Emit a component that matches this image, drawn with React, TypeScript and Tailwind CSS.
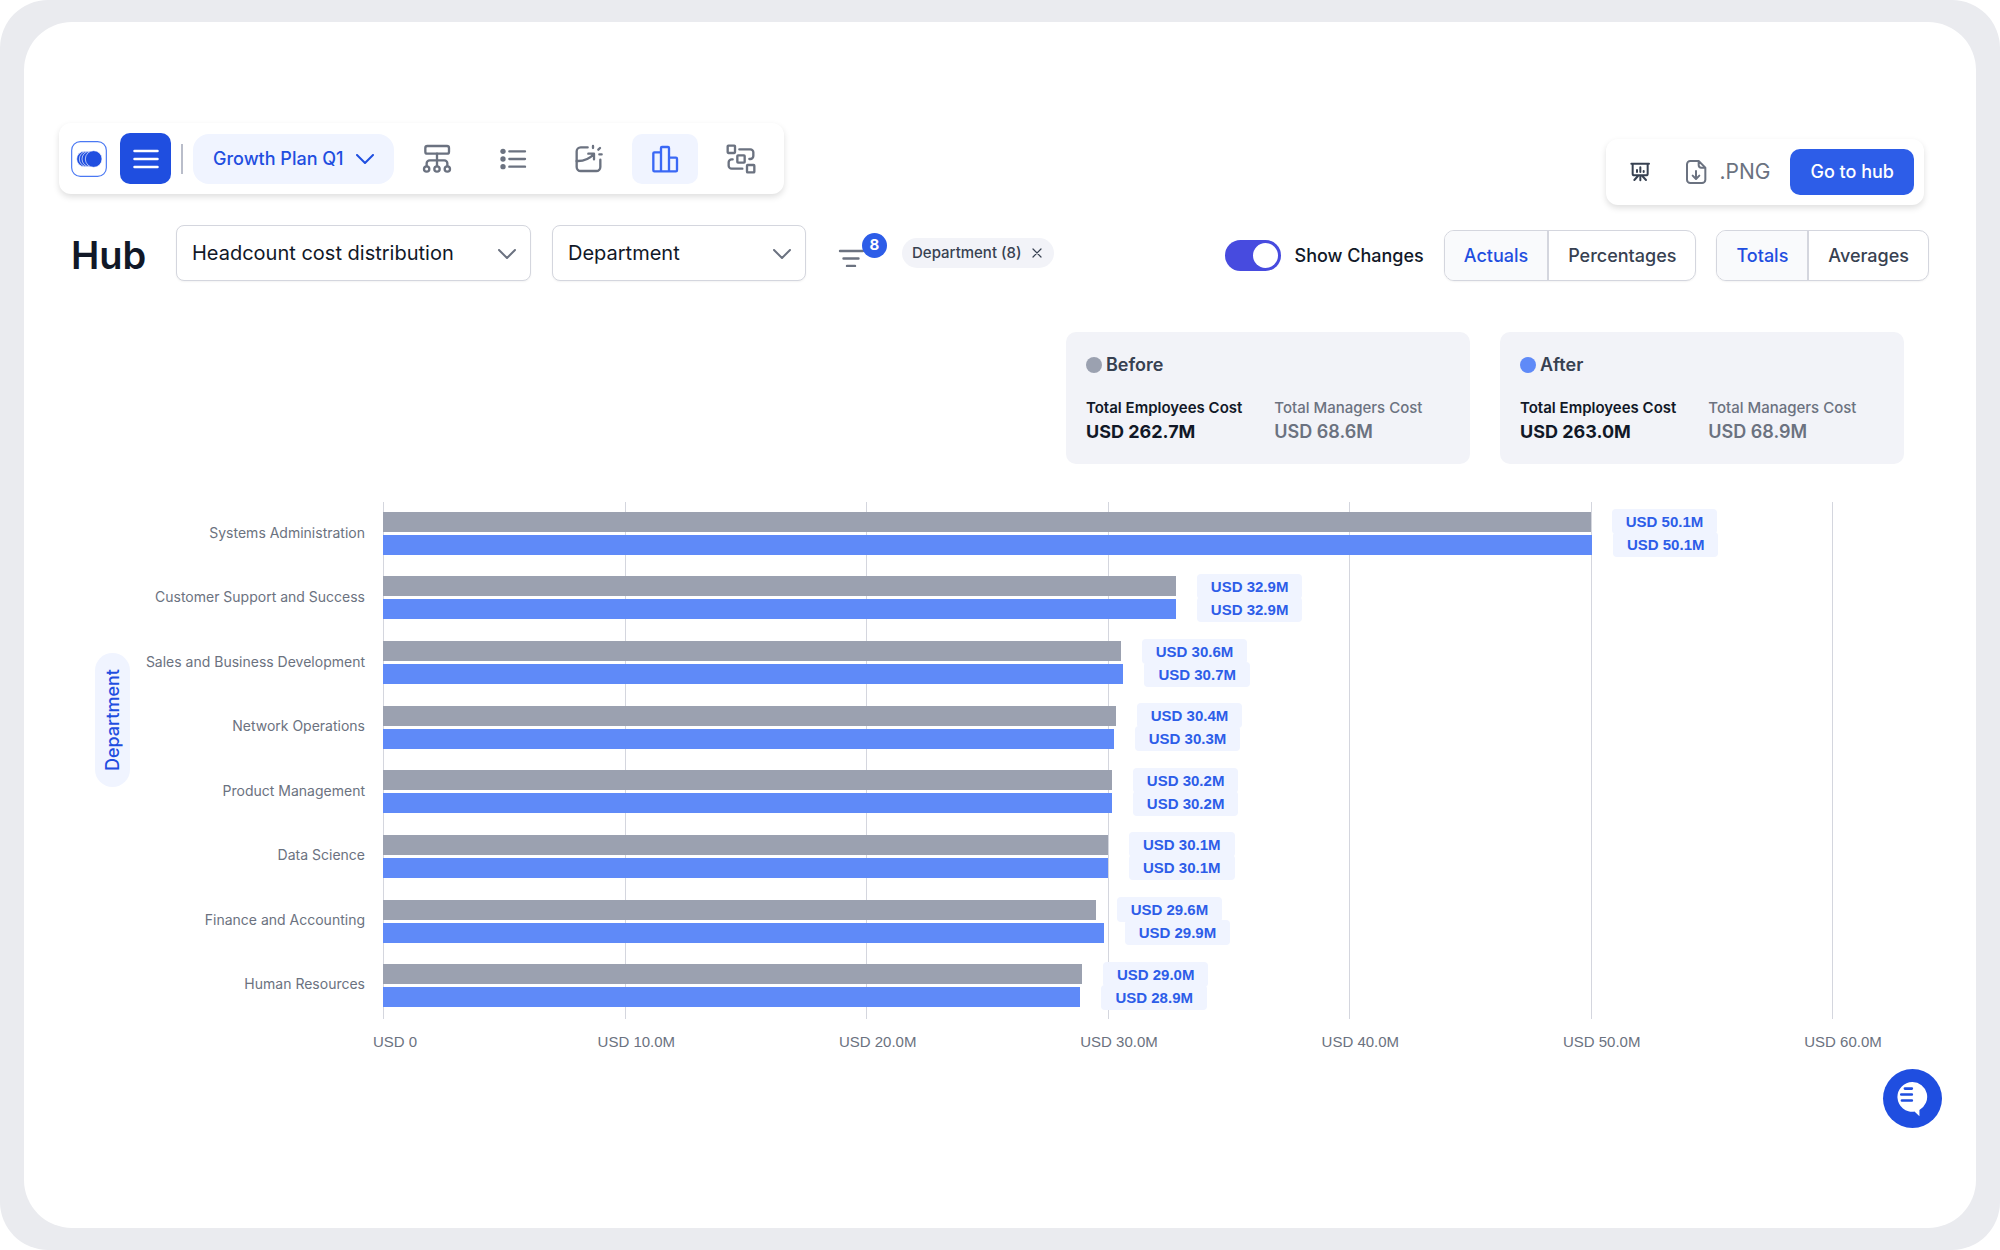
import React, { useState } from "react";

type Row = { name: string; before: [number, string]; after: [number, string] };

const rows: Row[] = [
  { name: "Systems Administration", before: [50.01, "USD 50.1M"], after: [50.06, "USD 50.1M"] },
  { name: "Customer Support and Success", before: [32.83, "USD 32.9M"], after: [32.83, "USD 32.9M"] },
  { name: "Sales and Business Development", before: [30.55, "USD 30.6M"], after: [30.66, "USD 30.7M"] },
  { name: "Network Operations", before: [30.34, "USD 30.4M"], after: [30.26, "USD 30.3M"] },
  { name: "Product Management", before: [30.18, "USD 30.2M"], after: [30.18, "USD 30.2M"] },
  { name: "Data Science", before: [30.02, "USD 30.1M"], after: [30.02, "USD 30.1M"] },
  { name: "Finance and Accounting", before: [29.51, "USD 29.6M"], after: [29.84, "USD 29.9M"] },
  { name: "Human Resources", before: [28.94, "USD 29.0M"], after: [28.88, "USD 28.9M"] },
];

const axisMax = 60;
const ticks = ["USD 0", "USD 10.0M", "USD 20.0M", "USD 30.0M", "USD 40.0M", "USD 50.0M", "USD 60.0M"];

const stroke = {
  fill: "none",
  stroke: "currentColor",
  strokeLinecap: "round" as const,
  strokeLinejoin: "round" as const,
};

const Chevron = ({ className }: { className: string }) => (
  <svg viewBox="0 0 18 10" className={className} {...stroke} strokeWidth={2} aria-hidden="true">
    <path d="M1 1l8 8 8-8" />
  </svg>
);

const LogoIcon = () => (
  <svg viewBox="0 0 108 108" className="size-9 shrink-0" aria-label="Home" role="img">
    <rect x="2" y="2" width="104" height="104" rx="26" fill="#fff" stroke="#4a78f3" strokeWidth="3.5" />
    <g fill="#1f4ee0" stroke="#fff" strokeWidth="2">
      <circle cx="40" cy="54" r="23" />
      <circle cx="48" cy="54" r="23" />
      <circle cx="56" cy="54" r="23" />
      <circle cx="68" cy="54" r="25" />
    </g>
  </svg>
);

const OrgIcon = () => (
  <svg viewBox="63 102 90 90" className="size-[30px]" {...stroke} strokeWidth={7} aria-hidden="true">
    <rect x="73" y="108" width="71" height="23" rx="6" />
    <path d="M108 131v37M77 168v-8a9 9 0 0 1 9-9h44a9 9 0 0 1 9 9v8" />
    <circle cx="77" cy="177" r="8" />
    <circle cx="108" cy="177" r="8" />
    <circle cx="139" cy="177" r="8" />
  </svg>
);

const ListIcon = () => (
  <svg viewBox="291 102 90 90" className="size-[30px]" {...stroke} strokeWidth={7} aria-hidden="true">
    <path d="M325 124h47M325 147h47M325 170h47" />
    <g fill="currentColor" stroke="none">
      <circle cx="306" cy="124" r="8" />
      <circle cx="306" cy="147" r="8" />
      <circle cx="306" cy="170" r="8" />
    </g>
  </svg>
);

const ForecastIcon = () => (
  <svg viewBox="522 102 90 90" className="size-[30px]" {...stroke} strokeWidth={7} aria-hidden="true">
    <path d="M563 112h-21a12 12 0 0 0-12 12v47a12 12 0 0 0 12 12h47a12 12 0 0 0 12-12v-22" />
    <path d="M530 153c20 1 38-6 52-21M565 131h17v17" />
    <path d="M579 108v6M600 114l-5 5M598 133h7" />
  </svg>
);

const BarsIcon = () => (
  <svg viewBox="749 102 90 90" className="size-[30px]" {...stroke} strokeWidth={7} aria-hidden="true">
    <path d="M782 184h-20a3 3 0 0 1-3-3v-51a3 3 0 0 1 3-3h20M782 184v-70a3 3 0 0 1 3-3h18a3 3 0 0 1 3 3v70zM806 143h21a3 3 0 0 1 3 3v35a3 3 0 0 1-3 3h-21" />
  </svg>
);

const FlowIcon = () => (
  <svg viewBox="978 102 90 90" className="size-[30px]" {...stroke} strokeWidth={7} aria-hidden="true">
    <rect x="983" y="107" width="22" height="22" rx="2" />
    <rect x="1012" y="136" width="22" height="22" rx="2" />
    <rect x="1041" y="165" width="22" height="22" rx="2" />
    <path d="M1018 118h33a9 9 0 0 1 9 9v11a9 9 0 0 1-9 9h-3M998 148h-3a9 9 0 0 0-9 9v10a9 9 0 0 0 9 9h32" />
  </svg>
);

const PresentIcon = () => (
  <svg viewBox="156 95 60 60" className="size-5" {...stroke} strokeWidth={6} aria-hidden="true">
    <path d="M160 100h53M164 100v30a5 5 0 0 0 5 5h35a5 5 0 0 0 5-5v-30M187 136v14M180 137l-11 12M193 137l11 12" />
    <path d="M177 119v6M187 111v14M197 122v3" />
  </svg>
);

const FileIcon = () => (
  <svg viewBox="317 83 84 84" className="size-7" {...stroke} strokeWidth={6} aria-hidden="true">
    <path d="M361 92h-25a10 10 0 0 0-10 10v46a10 10 0 0 0 10 10h35a10 10 0 0 0 10-10v-36zM361 92v12a8 8 0 0 0 8 8h12" />
    <path d="M353 122v23M343 136l10 10 10-10" />
  </svg>
);

const ChatIcon = () => (
  <svg viewBox="0 0 100 110" className="h-[37px] w-[33px]" aria-hidden="true">
    <path fill="#fff" d="M50 5a45 45 0 1 0 6 89.500l15 14v-19a45 45 0 0 0-21-84.500z" />
    <path stroke="#1f4ee0" strokeWidth="8" strokeLinecap="round" d="M27 25h21M16 43h32M18 61h30" />
  </svg>
);

function Segmented({ label, options }: { label: string; options: string[] }) {
  const [active, setActive] = useState(0);
  return (
    <div role="group" aria-label={label} className="flex h-[51px] divide-x-2 divide-[#d4d6de] overflow-hidden rounded-[10px] border border-[#d4d6de] bg-white shadow-xs">
      {options.map((o, i) => (
        <button
          key={o}
          type="button"
          aria-pressed={i === active}
          onClick={() => setActive(i)}
          className={i === active ? "bg-[#f9fafc] px-[19px] text-lg font-medium text-[#1f4ee0]" : "px-[19px] text-lg font-medium text-[#374151]"}
        >
          {o}
        </button>
      ))}
    </div>
  );
}

function Picker({ label, options, className }: { label: string; options: string[]; className: string }) {
  return (
    <div className={className}>
      <select aria-label={label} className="h-14 w-full appearance-none rounded-lg border border-[#d4d6de] bg-white px-[15px] text-xl text-[#111827] shadow-xs">
        {options.map((o) => (
          <option key={o}>{o}</option>
        ))}
      </select>
      <Chevron className="pointer-events-none absolute top-6 right-[15px] h-[10px] w-[18px] text-[#6b7280]" />
    </div>
  );
}

function SummaryCard({ title, dot, employees, managers }: { title: string; dot: string; employees: string; managers: string }) {
  return (
    <section className="w-[404px] rounded-[10px] bg-[#f2f3f8] p-5">
      <h2 className="flex items-center gap-1 text-lg leading-[26px] font-semibold text-[#374151]">
        <span className={dot} />
        {title}
      </h2>
      <dl className="mt-[18px] flex gap-8">
        <div className="text-[#111827]">
          <dt className="text-[15px] leading-6 font-semibold">{"Total Employees Cost"}</dt>
          <dd className="text-lg leading-6 font-bold">{employees}</dd>
        </div>
        <div className="text-[#6b7280]">
          <dt className="text-[15px] leading-6 font-medium">{"Total Managers Cost"}</dt>
          <dd className="text-lg leading-6 font-semibold">{managers}</dd>
        </div>
      </dl>
    </section>
  );
}

function Bar({ value, label, color }: { value: number; label: string; color: string }) {
  return (
    <div className="flex h-5 items-center">
      <div className={color} style={{ width: `${(value / axisMax) * 100}%` }} />
      <span className="ml-[21px] shrink-0 rounded bg-[#f0f4ff] px-[14px] font-['Liberation_Sans',sans-serif] text-[15px] leading-[25px] font-bold text-[#2d5de8]">
        {label}
      </span>
    </div>
  );
}

const tabs = [
  { label: "Org chart", icon: <OrgIcon /> },
  { label: "List", icon: <ListIcon /> },
  { label: "Forecast", icon: <ForecastIcon /> },
  { label: "Charts", icon: <BarsIcon /> },
  { label: "Flow", icon: <FlowIcon /> },
];

export default function App() {
  const [showChanges, setShowChanges] = useState(true);
  const [tab, setTab] = useState("Charts");

  return (
    <div className="flex min-h-screen flex-col rounded-[48px] bg-[#eaebef] px-6 py-[22px] font-['Inter',sans-serif]">
      <main className="flex grow flex-col rounded-[48px] bg-white px-[47px] pt-[101px] pb-[100px]">
        <div className="-mx-3 flex items-start justify-between">
          <nav className="flex items-center gap-[10px] rounded-xl bg-white p-[10px] pl-3 shadow-[0_3px_6px_rgba(0,0,0,0.13)]">
            <LogoIcon />
            <button type="button" aria-label="Menu" className="ml-[3px] flex size-[51px] items-center justify-center rounded-[10px] bg-[#1f4ee0] text-white">
              <svg viewBox="0 0 26 20" className="h-5 w-[26px]" {...stroke} strokeWidth={2.5} aria-hidden="true">
                <path d="M1.500 2h23M1.500 10h23M1.500 18h23" />
              </svg>
            </button>
            <span className="h-[30px] w-[2px] bg-[#b9bdca]" />
            <button type="button" className="flex h-[50px] items-center gap-3 rounded-2xl bg-[#f0f4ff] px-5 text-lg font-medium text-[#1f4ee0]">
              {"Growth Plan Q1"}
              <Chevron className="h-[10px] w-[18px]" />
            </button>
            {tabs.map((t) => (
              <button
                key={t.label}
                type="button"
                aria-label={t.label}
                aria-pressed={t.label === tab}
                onClick={() => setTab(t.label)}
                className={
                  t.label === tab
                    ? "flex h-[50px] w-[66px] items-center justify-center rounded-[10px] bg-[#f0f4ff] text-[#3a68f5]"
                    : "flex h-[50px] w-[66px] items-center justify-center rounded-[10px] text-[#6b7280]"
                }
              >
                {t.icon}
              </button>
            ))}
          </nav>
          <div className="mt-4 mr-[17px] flex items-center rounded-xl bg-white p-[10px] shadow-[0_3px_6px_rgba(0,0,0,0.13)]">
            <button type="button" aria-label="Present" className="px-[14px] text-[#374151]">
              <PresentIcon />
            </button>
            <button type="button" className="mr-5 ml-5 flex items-center gap-2 text-[21px] text-[#6b7280]">
              <FileIcon />
              {".PNG"}
            </button>
            <button type="button" className="h-[46px] rounded-[10px] bg-[#2d5de8] px-5 text-lg font-medium text-white">
              {"Go to hub"}
            </button>
          </div>
        </div>

        <header className="mt-5 flex items-end justify-between">
          <div className="flex items-center">
            <h1 className="w-[105px] pt-1 text-[38px] leading-[52px] font-semibold text-[#111827]">Hub</h1>
            <Picker label="Metric" options={["Headcount cost distribution"]} className="relative w-[355px]" />
            <Picker label="Group by" options={["Department"]} className="relative ml-[21px] w-[254px]" />
            <button type="button" aria-label="Filters" className="relative ml-8 pt-[10px] text-[#6b7280]">
              <svg viewBox="0 0 28 18" className="h-[18px] w-7" {...stroke} strokeWidth={2.400} aria-hidden="true">
                <path d="M2 2h23M5.500 9.500h15M9 17h8" />
              </svg>
              <span className="absolute -top-[6px] left-6 flex size-[25px] items-center justify-center rounded-full bg-[#2d5de8] text-[15px] font-bold text-white">
                8
              </span>
            </button>
            <div className="ml-9 flex h-[30px] items-center gap-[10px] rounded-full bg-[#f2f3f8] pr-3 pl-[10px] text-[15px] font-medium text-[#374151]">
              {"Department (8)"}
              <button type="button" aria-label="Remove filter">
                <svg viewBox="0 0 10 10" className="size-[10px]" {...stroke} strokeWidth={1.200} aria-hidden="true">
                  <path d="M1 1l8 8M9 1l-8 8" />
                </svg>
              </button>
            </div>
          </div>

          <div className="flex items-center gap-5">
            <label className="flex items-center gap-[14px] text-lg font-medium text-[#111827]">
              <input
                type="checkbox"
                role="switch"
                checked={showChanges}
                onChange={(e) => setShowChanges(e.target.checked)}
                className="flex h-[31px] w-14 appearance-none items-center rounded-full bg-gray-300 px-[3px] before:size-[25px] before:rounded-full before:bg-white before:content-[''] checked:justify-end checked:bg-[#474bdf]"
              />
              {"Show Changes"}
            </label>
            <Segmented label="Value type" options={["Actuals", "Percentages"]} />
            <Segmented label="Aggregation" options={["Totals", "Averages"]} />
          </div>
        </header>

        <div className="mt-[51px] mr-[25px] flex justify-end gap-[30px]">
          <SummaryCard title="Before" dot="size-4 rounded-full bg-[#9ba1b0]" employees="USD 262.7M" managers="USD 68.6M" />
          <SummaryCard title="After" dot="size-4 rounded-full bg-[#5f8af8]" employees="USD 263.0M" managers="USD 68.9M" />
        </div>

        <div className="mt-[38px] mr-[97px] ml-6 flex">
          <div className="flex items-center pb-[116px]">
            <span className="rotate-180 rounded-full bg-[#f0f4ff] px-4 py-[5px] text-lg leading-[25px] font-medium text-[#1f4ee0] [writing-mode:vertical-rl]">
              {"Department"}
            </span>
          </div>
          <ul className="flex h-[517px] w-[235px] flex-col pb-px text-right text-sm text-[#6b7280]">
            {rows.map((r) => (
              <li key={r.name} className="flex flex-1 items-center justify-end pb-[3px] whitespace-nowrap">
                {r.name}
              </li>
            ))}
          </ul>
          <div className="ml-[18px] grow">
            <div className="relative h-[517px]">
              <div className="absolute inset-0 flex justify-between" aria-hidden="true">
                {ticks.map((t) => (
                  <span key={t} className="-mr-px w-px bg-[#d4d6de]" />
                ))}
              </div>
              <div className="relative flex h-full flex-col">
                {rows.map((r) => (
                  <div key={r.name} className="flex flex-1 flex-col justify-center gap-[3px] pb-[2px]">
                    <Bar value={r.before[0]} label={r.before[1]} color="h-5 shrink-0 bg-[#9ba1b0]" />
                    <Bar value={r.after[0]} label={r.after[1]} color="h-5 shrink-0 bg-[#5f8af8]" />
                  </div>
                ))}
              </div>
            </div>
            <div className="mt-[11px] -mr-[11px] flex justify-between pl-3 font-['Liberation_Sans',sans-serif] text-[15px] leading-6 text-[#6b7280]">
              {ticks.map((t) => (
                <span key={t} className="flex w-0 justify-center whitespace-nowrap">
                  <span>{t}</span>
                </span>
              ))}
            </div>
          </div>
        </div>

        <button type="button" aria-label="Open chat" className="mt-[15px] -mr-[13px] flex size-[59px] items-center justify-center self-end rounded-full bg-[#1f4ee0]">
          <ChatIcon />
        </button>
      </main>
    </div>
  );
}
